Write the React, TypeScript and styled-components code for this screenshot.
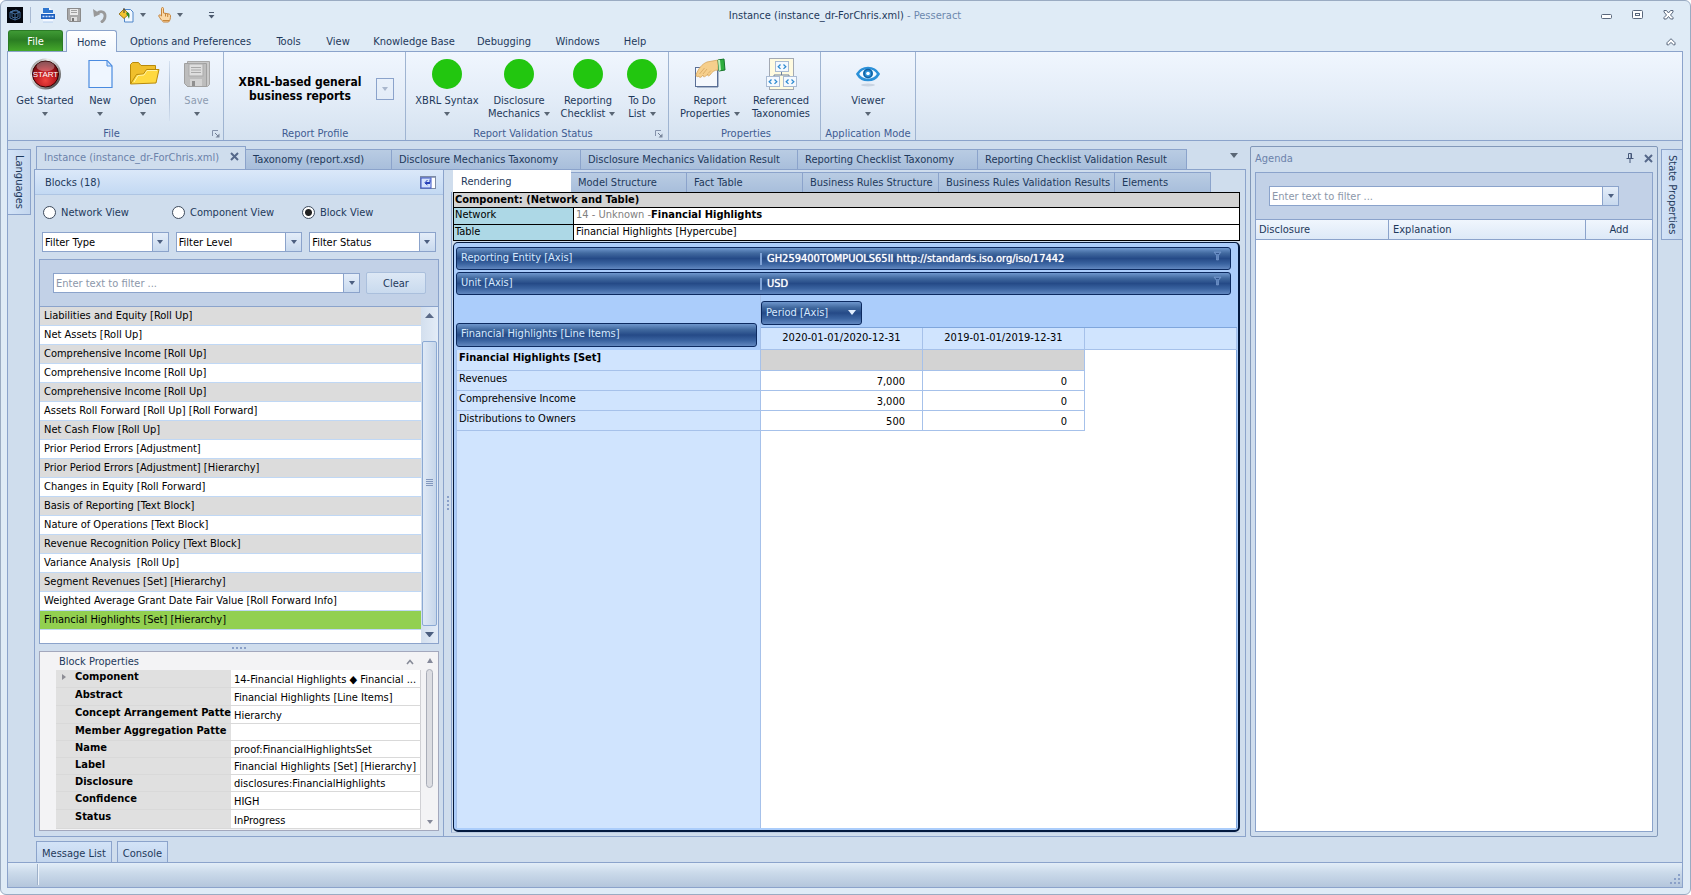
import React, { useState } from "react";
import styled, { createGlobalStyle, css } from "styled-components";

const FONT = `"DejaVu Sans Condensed", "DejaVu Sans", sans-serif`;
const c = {
  ink: "#1e395b",
  line: "#8ba3cb",
  frame: "#dfebf6",
  work: "#cfdded",
  pale: "#c2d1e7",
};

const GlobalStyle = createGlobalStyle`
  * { box-sizing: border-box; }
  body { margin: 0; background: #ffffff; font: 11px/13px ${FONT}; color: ${c.ink}; }
  button, input, select { font: inherit; color: inherit; margin: 0; }
  button { background: none; border: 0; padding: 0; cursor: pointer; }
  h1, h2 { margin: 0; font: inherit; }
`;

const Window = styled.div`
  min-height: 100vh;
  display: flex;
  flex-direction: column;
  background: ${c.frame};
  border: 1px solid #9aabc2;
  border-radius: 6px;
  padding: 0 7px 6px 6px;
`;

/* Title bar */
const TitleBar = styled.header`
  display: grid;
  grid-template-columns: 1fr auto 1fr;
  align-items: center;
  height: 29px;
  padding-bottom: 1px;
`;
const QuickBar = styled.div`
  display: flex;
  align-items: center;
`;
const QuickButton = styled.button<{ $w: number }>`
  width: ${(p) => p.$w}px;
  height: 20px;
  display: flex;
  align-items: center;
  gap: 6px;
`;
const QuickDivider = styled.span`
  width: 1px;
  height: 16px;
  margin: 0 10px 0 7px;
  background: #a9bad2;
`;
const Title = styled.h1`
  text-align: center;
  span { color: #6c88ae; }
`;
const WindowButtons = styled.div`
  display: flex;
  justify-content: flex-end;
  gap: 18px;
  padding-right: 8px;
  button { width: 13px; height: 14px; display: flex; align-items: center; justify-content: center; }
`;

/* Ribbon */
const MenuBar = styled.nav`
  display: flex;
  align-items: flex-end;
  height: 21px;
  padding-left: 1px;
`;
const FileTab = styled.button`
  width: 55px;
  height: 21px;
  color: #ffffff;
  background: linear-gradient(#3f9a35, #2a7d22 45%, #45a82b);
  border: 1px solid #2b7a25;
  border-bottom: 0;
  border-radius: 3px 3px 0 0;
`;
const MenuTab = styled.button<{ $w: number; $active?: boolean }>`
  width: ${(p) => p.$w}px;
  height: 21px;
  padding-top: 2px;
  white-space: nowrap;
  ${(p) =>
    p.$active &&
    css`
      height: 22px;
      margin: 0 0 -1px 3px;
      background: linear-gradient(#ffffff, #f0f6fd);
      border: 1px solid ${c.line};
      border-bottom: 0;
      border-radius: 3px 3px 0 0;
      z-index: 1;
    `}
`;
const CollapseButton = styled.button`
  margin: 0 7px 3px auto;
  height: 12px;
`;
const Ribbon = styled.section`
  display: flex;
  height: 90px;
  border: 1px solid ${c.line};
  background: linear-gradient(#f0f6fe, #e4edf8 50%, #d5e2f0);
`;
const Group = styled.div<{ $pad: string }>`
  display: flex;
  flex-direction: column;
  justify-content: space-between;
  padding: ${(p) => p.$pad};
  border-right: 1px solid #9fb4d1;
`;
const GroupItems = styled.div`
  display: flex;
  padding-top: 5px;
`;
const GroupCaption = styled.div`
  display: flex;
  align-items: center;
  height: 13px;
  color: #3f5c92;
  span { flex: 1; text-align: center; white-space: nowrap; }
`;
const ItemDivider = styled.span`
  width: 1px;
  height: 60px;
  margin: 4px 3px 0 4px;
  background: linear-gradient(#d5e1f0, #a5b8d2, #d5e1f0);
`;
const RibbonButton = styled.button<{ $w: number; $dim?: boolean }>`
  width: ${(p) => p.$w}px;
  display: flex;
  flex-direction: column;
  align-items: center;
  line-height: 13px;
  white-space: nowrap;
  color: ${(p) => (p.$dim ? "#8d9bb0" : c.ink)};
  > svg { margin-bottom: 3px; }
`;
const LabelLine = styled.span`
  display: flex;
  align-items: center;
  gap: 4px;
  height: 13px;
`;
const ProfileBox = styled.div`
  display: flex;
  align-items: center;
  gap: 12px;
  height: 64px;
  padding-top: 10px;
`;
const ProfileName = styled.strong`
  width: 128px;
  color: #000000;
  font-size: 12px;
  line-height: 14px;
  text-align: center;
  white-space: nowrap;
`;
const ProfileButton = styled.button`
  width: 18px;
  height: 22px;
  border: 1px solid #8ba3cb;
  display: flex;
  align-items: center;
  justify-content: center;
`;

/* Workspace */
const Workspace = styled.main`
  flex: 1;
  display: flex;
  padding-top: 5px;
  background: ${c.work};
  border: solid ${c.line};
  border-width: 0 1px;
`;
const SideStrip = styled.aside<{ $w: number; $end?: boolean }>`
  width: ${(p) => p.$w}px;
  flex: none;
  display: flex;
  justify-content: ${(p) => (p.$end ? "flex-end" : "flex-start")};
  align-items: flex-start;
  padding-top: 3px;
`;
const SideTab = styled.button<{ $end?: boolean }>`
  writing-mode: vertical-rl;
  width: ${(p) => (p.$end ? 21 : 23)}px;
  padding: 5px 0;
  line-height: 20px;
  text-align: left;
  background: linear-gradient(90deg, #d3e3f7, #c3d6ee);
  border: 1px solid ${c.line};
  border-${(p) => (p.$end ? "right" : "left")}: 0;
`;
const Center = styled.section`
  flex: 1;
  min-width: 0;
  display: flex;
  flex-direction: column;
`;
const DocTabs = styled.div`
  display: flex;
  align-items: flex-end;
  height: 23px;
  padding: 0 8px 0 2px;
  overflow: hidden;
`;
const Tab = styled.button<{ $w: number }>`
  flex: none;
  width: ${(p) => p.$w}px;
  height: 20px;
  padding-left: 7px;
  text-align: left;
  white-space: nowrap;
  background: linear-gradient(#b9cce3, #a8bedb);
  border: 1px solid ${c.line};
  border-left-width: 0;
  border-bottom: 0;
`;
const ActiveDoc = styled.div`
  flex: none;
  display: flex;
  align-items: center;
  justify-content: space-between;
  width: 210px;
  height: 23px;
  padding: 0 6px 2px 7px;
  color: #6c82aa;
  background: ${c.work};
  border: 1px solid ${c.line};
  border-bottom: 0;
`;
const TabMenuButton = styled.button`
  margin-left: auto;
  height: 23px;
  padding-bottom: 6px;
`;
const DocBody = styled.div`
  flex: 1;
  display: flex;
  border: 1px solid ${c.line};
`;

/* Blocks panel */
const Blocks = styled.section`
  width: 409px;
  flex: none;
  display: flex;
  flex-direction: column;
  border-right: 1px solid ${c.line};
  background: ${c.work};
`;
const BlocksHead = styled.div`
  display: flex;
  align-items: center;
  justify-content: space-between;
  height: 25px;
  padding: 0 7px 0 10px;
  background: linear-gradient(#dbe8f9, #c3d9f3);
  border-bottom: 1px solid #aec5e3;
  button { height: 13px; display: flex; }
`;
const Radios = styled.div`
  display: grid;
  grid-template-columns: 129px 130px 1fr;
  align-items: center;
  height: 34px;
  padding: 0 0 0 8px;
`;
const RadioLabel = styled.label`
  display: flex;
  align-items: center;
  gap: 5px;
  white-space: nowrap;
  input {
    appearance: none;
    width: 13px;
    height: 13px;
    border: 1px solid #3d4a5c;
    border-radius: 50%;
    background: #ffffff;
  }
  input:checked { background: radial-gradient(circle, #222222 0 3px, #ffffff 4px); }
`;
const Combos = styled.div`
  display: grid;
  grid-template-columns: 1fr 1fr 1fr;
  gap: 7px;
  padding: 3px 7px 0 7px;
`;
const Combo = styled.div`
  display: grid;
  height: 20px;
  border: 1px solid ${c.line};
  background: #ffffff;
  > * { grid-area: 1 / 1; }
  select {
    appearance: none;
    width: 100%;
    border: 0;
    padding: 0 18px 0 2px;
    background: none;
    color: #000000;
    outline: none;
  }
`;
const arrowFace = css`
  display: flex;
  align-items: center;
  justify-content: center;
  width: 16px;
  border-left: 1px solid ${c.line};
  background: linear-gradient(#e4edf9, #c8d9ee);
`;
const ComboArrow = styled.span`
  ${arrowFace}
  justify-self: end;
  pointer-events: none;
`;
const FilterBox = styled.div<{ $pad: string }>`
  display: flex;
  align-items: center;
  gap: 6px;
  height: 47px;
  padding: ${(p) => p.$pad};
  background: ${c.pale};
  border-bottom: 1px solid ${c.line};
`;
const FilterField = styled.div`
  flex: 1;
  display: flex;
  height: 20px;
  border: 1px solid ${c.line};
  background: #ffffff;
  input {
    flex: 1;
    min-width: 0;
    border: 0;
    padding: 0 2px;
    background: none;
    outline: none;
  }
  input::placeholder { color: #8c97aa; opacity: 1; }
  button { ${arrowFace} }
`;
const ClearButton = styled.button`
  width: 60px;
  height: 22px;
  border: 1px solid #aabfdc;
  border-radius: 2px;
  background: linear-gradient(#dde8f5, #c9daee);
`;
const ListBox = styled.div`
  flex: 1;
  display: flex;
  flex-direction: column;
  margin: 7px 4px 0 4px;
  border: 1px solid ${c.line};
  background: #ffffff;
`;
const ListArea = styled.div`
  flex: 1;
  display: flex;
`;
const List = styled.ul`
  flex: 1;
  margin: 0;
  padding: 0;
  list-style: none;
  color: #000000;
`;
const ListItem = styled.li<{ $tone: "grey" | "white" | "green" }>`
  height: 19px;
  padding-left: 4px;
  line-height: 17px;
  white-space: pre;
  border-bottom: 1px solid #c0d8f5;
  background: ${(p) => ({ grey: "#dcdcdc", white: "#ffffff", green: "#92d050" })[p.$tone]};
`;
const Scroller = styled.div<{ $grey?: boolean }>`
  width: 17px;
  display: flex;
  flex-direction: column;
  align-items: center;
  padding: 6px 0;
  background: ${(p) => (p.$grey ? "#f3f3f5" : "linear-gradient(90deg, #d3dfee, #e3ecf7)")};
`;
const Thumb = styled.div`
  flex: 1;
  display: flex;
  align-items: center;
  justify-content: center;
  width: 15px;
  margin: 23px 0 6px;
  border: 1px solid #8ba9d3;
  border-radius: 2px;
  background: linear-gradient(90deg, #dfe9f6, #c6d6ea);
`;
const GreyThumb = styled.div`
  width: 7px;
  height: 119px;
  margin: 6px 0 auto;
  border: 1px solid #a9adb8;
  border-radius: 4px;
  background: #dcdde2;
`;
const RowSplitter = styled.div`
  height: 7px;
  display: flex;
  align-items: center;
  justify-content: center;
`;
const Props = styled.div`
  height: 180px;
  display: flex;
  margin: 0 4px 5px 4px;
  border: 1px solid #a3a8bd;
  background: #f3f3f5;
`;
const PropsMain = styled.div`
  flex: 1;
  min-width: 0;
  padding-left: 16px;
  overflow: hidden;
`;
const PropsHead = styled.div`
  display: flex;
  align-items: center;
  justify-content: space-between;
  height: 18px;
  padding: 0 7px 0 3px;
`;
const PropTable = styled.table`
  width: 100%;
  table-layout: fixed;
  border-collapse: separate;
  border-spacing: 0;
  color: #000000;
  th, td { padding: 0; white-space: nowrap; text-align: left; border-bottom: 1px solid #d9d9d9; }
  th { width: 175px; background: #e0e0e0; vertical-align: top; line-height: 13px; }
  td { background: #ffffff; border-right: 1px solid #d0d0d4; vertical-align: bottom; line-height: 14px; padding-left: 3px; }
`;
const PropRow = styled.tr<{ $h: number }>`
  height: ${(p) => p.$h}px;
`;
const PropName = styled.span`
  display: flex;
  align-items: center;
  svg { flex: none; margin: 0 8px 0 5px; }
`;

/* Rendering pane */
const ColumnSplitter = styled.div`
  width: 7px;
  flex: none;
  display: flex;
  align-items: center;
  justify-content: center;
`;
const Pane = styled.section`
  flex: 1;
  min-width: 0;
  display: flex;
  flex-direction: column;
  padding: 0 5px 3px 0;
`;
const PaneTabs = styled.div`
  display: flex;
  align-items: flex-end;
  height: 22px;
  padding-left: 2px;
  overflow: hidden;
`;
const ActivePaneTab = styled.button`
  flex: none;
  width: 118px;
  height: 22px;
  padding-left: 8px;
  text-align: left;
  background: #ffffff;
`;
const PaneBody = styled.div`
  flex: 1;
  display: flex;
  flex-direction: column;
  padding-left: 1px;
  border-left: 1px solid ${c.line};
  border-bottom: 1px solid #b9c9e0;
`;
const InfoTable = styled.table`
  width: 100%;
  border-collapse: collapse;
  color: #000000;
  background: #ffffff;
  margin-bottom: 1px;
  th, td { border: 1px solid #000000; padding: 0 2px; height: 16px; line-height: 14px; text-align: left; vertical-align: top; }
  thead th { background: #d3d3d3; font-weight: bold; height: 15px; padding: 0 1px; }
  tbody th { width: 120px; background: #add8e6; font-weight: normal; padding: 0 1px; }
  tbody tr:first-child > * { height: 17px; }
  td span { color: #808080; }
`;
const Pivot = styled.div`
  flex: 1;
  display: flex;
  flex-direction: column;
  padding: 4px 1px 2px 2px;
  border: 1px solid #03193f;
  border-right-width: 2px;
  border-bottom-width: 2px;
  border-radius: 5px;
  background: #abcdfb;
`;
const barFace = css`
  color: #d6e9ff;
  background: linear-gradient(#6f97cd, #41699f 25%, #254a87 50%, #3a63a0 75%, #6288c0);
  border: 1px solid #0c2a60;
  border-radius: 3px;
`;
const Bars = styled.div`
  display: flex;
  flex-direction: column;
  gap: 2px;
  padding-right: 6px;
`;
const AxisBar = styled.div`
  ${barFace}
  display: grid;
  grid-template-columns: 299px 1fr auto;
  height: 23px;
  padding: 0 8px 0 4px;
  line-height: 20px;
  svg { margin-top: 3px; }
`;
const AxisValue = styled.span`
  display: flex;
  align-items: center;
  gap: 5px;
  color: #ffffff;
  text-shadow: 0 0 1px #ffffff;
  &::before { content: ""; width: 2px; height: 12px; background: #7fa2d6; }
`;
const PivotTable = styled.table`
  width: 100%;
  table-layout: fixed;
  border-collapse: separate;
  border-spacing: 0;
  color: #000000;
  th, td { padding: 0; font-weight: normal; }
`;
const LineItemsCell = styled.th`
  vertical-align: bottom;
  text-align: left;
  border-right: 1px solid #a6c1ea;
`;
const LineItems = styled.div`
  ${barFace}
  height: 24px;
  margin: 0 3px 3px 0;
  padding-left: 4px;
  line-height: 20px;
`;
const PeriodCell = styled.th`
  height: 33px;
  text-align: left;
  vertical-align: top;
  border-bottom: 1px solid #7fa6dc;
`;
const PeriodButton = styled.button`
  ${barFace}
  display: flex;
  align-items: center;
  justify-content: space-between;
  width: 101px;
  height: 24px;
  margin-top: 6px;
  padding: 0 5px 1px 4px;
`;
const ColHead = styled.th`
  height: 22px;
  background: #d0e4fe;
  border-right: 1px solid #a6c1ea;
  border-bottom: 1px solid #a6c1ea;
  && { padding-bottom: 3px; }
`;
const RowHead = styled.th<{ $first?: boolean }>`
  height: ${(p) => (p.$first ? 21 : 20)}px;
  text-align: left;
  vertical-align: top;
  background: #d0e4fe;
  border: solid #a6c1ea;
  border-width: 0 1px 1px 1px;
  && { padding: 1px 0 0 2px; font-weight: ${(p) => (p.$first ? "bold" : "normal")}; }
`;
const Cell = styled.td<{ $grey?: boolean }>`
  text-align: right;
  background: ${(p) => (p.$grey ? "#d3d3d3" : "#ffffff")};
  border-right: 1px solid #a6c1ea;
  border-bottom: 1px solid #a6c1ea;
  && { padding: 2px 17px 0 0; }
`;
const Blank = styled.td`
  background: #ffffff;
  border-right: 1px solid #7fa6dc;
`;
const Rest = styled.div`
  flex: 1;
  display: grid;
  grid-template-columns: 305px 1fr;
  background: #ffffff;
  border-right: 1px solid #7fa6dc;
  &::before { content: ""; background: #d0e4fe; border: solid #a6c1ea; border-width: 0 1px; }
`;

/* Agenda */
const Agenda = styled.aside`
  width: 408px;
  flex: none;
  margin-left: 4px;
  padding: 0 4px 4px 4px;
  display: flex;
  flex-direction: column;
  border: 1px solid #8298b9;
  border-radius: 2px;
`;
const AgendaHead = styled.div`
  display: flex;
  align-items: center;
  gap: 10px;
  height: 25px;
  padding-bottom: 3px;
  color: #6c82aa;
  h2 { flex: 1; }
  button { height: 14px; display: flex; align-items: center; }
`;
const AgendaBody = styled.div`
  flex: 1;
  background: #ffffff;
  border: 1px solid ${c.line};
`;
const AgendaTable = styled.table`
  width: 100%;
  table-layout: fixed;
  border-collapse: separate;
  border-spacing: 0;
  th {
    height: 20px;
    padding: 0 4px;
    font-weight: normal;
    text-align: left;
    background: linear-gradient(#f0f6fd, #dde9f7);
    border: solid ${c.line};
    border-width: 0 1px 1px 0;
  }
  th:first-child { width: 133px; padding: 0 3px; }
  th:last-child { width: 66px; text-align: center; border-right: 0; }
`;

/* Bottom */
const BottomTabs = styled.div`
  display: flex;
  gap: 5px;
  height: 25px;
  padding: 4px 0 0 28px;
  background: ${c.work};
  border: solid ${c.line};
  border-width: 0 1px;
  button {
    padding: 2px 5px 0;
    border: 1px solid ${c.line};
    border-bottom: 0;
    background: linear-gradient(#d3e3f7, #c3d6ee);
  }
`;
const StatusBar = styled.footer`
  display: flex;
  align-items: flex-end;
  justify-content: space-between;
  height: 26px;
  padding: 0 1px 2px 29px;
  border: 1px solid ${c.line};
  background: linear-gradient(#e2edf8, #cbdaea 40%, #b4c6dc);
  &::before { content: ""; width: 1px; height: 21px; background: #eef4fb; border-left: 1px solid #9db0c9; box-sizing: content-box; }
`;

/* Glyphs */
const Caret = ({ w = 6, fill = "#5a6675" }: { w?: number; fill?: string }) => (
  <svg width={w} height={w / 2 + 1} viewBox="0 0 6 4" preserveAspectRatio="none" aria-hidden="true">
    <path d="M0 0h6L3 4z" fill={fill} />
  </svg>
);
const UpTri = ({ w = 9, fill = "#5a6a88" }: { w?: number; fill?: string }) => (
  <svg width={w} height="5" viewBox="0 0 9 5" preserveAspectRatio="none" aria-hidden="true">
    <path d="M0 5h9L4.500 0z" fill={fill} />
  </svg>
);
const Cross = ({ size = 9 }: { size?: number }) => (
  <svg width={size} height={size} viewBox="0 0 9 9" aria-hidden="true">
    <path d="M1 1l7 7M8 1L1 8" stroke="#56688a" strokeWidth="2" />
  </svg>
);
const Dots = ({ vertical }: { vertical?: boolean }) => (
  <svg width={vertical ? 2 : 14} height={vertical ? 14 : 2} aria-hidden="true">
    {[0, 4, 8, 12].map((n) => (
      <rect key={n} x={vertical ? 0 : n} y={vertical ? n : 0} width="2" height="2" fill="#8aa0c8" />
    ))}
  </svg>
);
const Launcher = () => (
  <svg width="8" height="8" viewBox="0 0 8 8" aria-hidden="true">
    <path d="M.5 6V.5H6" fill="none" stroke="#8492ab" />
    <path d="M3 3l3 3" stroke="#6f7c94" />
    <path d="M7.500 3.500v4h-4z" fill="#7b879c" />
  </svg>
);
const Funnel = () => (
  <svg width="9" height="10" viewBox="0 0 9 10" aria-hidden="true">
    <path d="M1 1h7L5.500 4.500V9h-2V4.500z" fill="#5d83bd" stroke="#7d9fd2" strokeWidth=".6" />
    <path d="M3 2.500h3" stroke="#27497f" strokeWidth=".8" />
  </svg>
);
const LogoIcon = () => (
  <svg width="16" height="16" viewBox="0 0 16 16" aria-hidden="true">
    <rect width="16" height="16" fill="#03060d" />
    <path d="M3 5l6-2 4 2v6l-5 2-5-2zM3 5l5 2 5-2M8 7v6M5 4v6l3 1 3-1V4z" fill="none" stroke="#4f80b8" strokeWidth=".8" />
  </svg>
);
const XbrlIcon = () => (
  <svg width="14" height="15" viewBox="0 0 14 15" aria-hidden="true">
    <path d="M2 0h7l3 3v11H2z" fill="#f3f8ff" />
    <path d="M2 5V0h6v2h4v3z" fill="#2f77d0" />
    <rect y="6" width="14" height="5" fill="#1c5fc0" />
    <path d="M1.500 8.500h11" stroke="#cfe2ff" strokeWidth="1.600" strokeDasharray="2 1" />
    <path d="M2 14h10" stroke="#b6cfee" />
  </svg>
);
const DiskIcon = () => (
  <svg width="14" height="14" viewBox="0 0 14 14" aria-hidden="true">
    <path d="M.5.5h13v13h-11l-2-2z" fill="#a9a9a9" stroke="#8b8b8b" />
    <rect x="3" y="1" width="8" height="6" fill="#e9e9e9" />
    <path d="M4 2.500h6M4 4.500h6" stroke="#a0a0a0" />
    <rect x="4" y="9" width="6" height="4" fill="#dedede" />
    <rect x="5" y="10" width="2" height="3" fill="#777" />
  </svg>
);
const UndoIcon = () => (
  <svg width="14" height="15" viewBox="0 0 14 15" aria-hidden="true">
    <path d="M4 5.500c4-3.500 8.500-1.500 8 3 0 2.500-1.500 4.500-4 6" fill="none" stroke="#999999" strokeWidth="2.800" />
    <path d="M0 1l1 8 6.500-3z" fill="#999999" />
  </svg>
);
const PaintIcon = () => (
  <svg width="15" height="15" viewBox="0 0 15 15" aria-hidden="true">
    <path d="M5.500 1.500h6l2.500 2.500v10H5.500z" fill="#f1f7ff" stroke="#4f86c9" />
    <path d="M0 6l5-5 5 5-5 4.500z" fill="#f2c230" stroke="#8a6410" strokeWidth=".8" />
    <path d="M5 5V0" stroke="#3b3b3b" />
    <path d="M8 4c3 1 3 3 2 7-1-2-1-4-3-5z" fill="#2f8a2c" />
  </svg>
);
const HandIcon = () => (
  <svg width="13" height="16" viewBox="0 0 13 16" aria-hidden="true">
    <path d="M3.500 9V1.500c0-1.300 2-1.300 2 0V6l5.500 1c1 .3 1.500 1 1.500 2 0 2-.5 5-2 6h-5C3 13 2 11 .7 9c0-1.500 1.500-1.500 2.800 0z" fill="#fbd9a8" stroke="#c27a2c" strokeWidth=".9" />
    <path d="M7.500 6.500v3M9.700 7v3M5 13.500h6" stroke="#b9711f" strokeWidth=".8" />
  </svg>
);
const MoreIcon = () => (
  <svg width="7" height="8" viewBox="0 0 7 8" aria-hidden="true">
    <path d="M1 1.500h5" stroke="#4c5a6e" />
    <path d="M.5 4h6L3.500 7.500z" fill="#4c5a6e" />
  </svg>
);
const StartIcon = () => (
  <svg width="34" height="34" viewBox="0 0 34 34" aria-hidden="true">
    <defs>
      <radialGradient id="red" cx=".5" cy=".75" r=".7">
        <stop offset="0" stopColor="#f0453f" />
        <stop offset=".6" stopColor="#b3141b" />
        <stop offset="1" stopColor="#5d0a10" />
      </radialGradient>
      <linearGradient id="rim" x2="1" y2="1">
        <stop offset="0" stopColor="#555" />
        <stop offset=".3" stopColor="#eee" />
        <stop offset=".7" stopColor="#888" />
        <stop offset="1" stopColor="#111" />
      </linearGradient>
    </defs>
    <circle cx="17.500" cy="17" r="15.500" fill="url(#rim)" />
    <circle cx="17.500" cy="17" r="13" fill="url(#red)" stroke="#300" />
    <ellipse cx="17.500" cy="9.500" rx="9" ry="5" fill="#fff" opacity=".3" />
    <text x="17.500" y="20" textAnchor="middle" fontFamily="Liberation Sans, sans-serif" fontSize="8" fill="#fff">START</text>
  </svg>
);
const NewIcon = () => (
  <svg width="34" height="34" viewBox="0 0 34 34" aria-hidden="true">
    <path d="M6 3.500h18l5 5.500v21.500H6z" fill="#eff6ff" stroke="#4a8be0" strokeWidth="1.200" />
    <path d="M24 3.500V9h5z" fill="#cfe2fa" stroke="#4a8be0" />
  </svg>
);
const OpenIcon = () => (
  <svg width="34" height="34" viewBox="0 0 34 34" aria-hidden="true">
    <path d="M4.500 27V7.500l2-2h6l2.500 3h14.500v6" fill="#f0bf2c" stroke="#b98a0b" />
    <path d="M4.500 27l6-9.500 7-.5 3-4.500h12.500L30 26z" fill="#ffd93f" stroke="#b98a0b" />
    <path d="M8 25l4-6.500 6-.5 3-4.500h10" fill="none" stroke="#fff3a5" />
  </svg>
);
const SaveIcon = () => (
  <svg width="34" height="34" viewBox="0 0 34 34" aria-hidden="true">
    <path d="M7.500 4.500h22v23l-2 2h-20z" fill="#c9c9c9" stroke="#a7a7a7" />
    <path d="M4.500 6.500h22v23h-19l-3-3z" fill="#bdbdbd" stroke="#a0a0a0" />
    <rect x="9" y="7" width="14" height="12" fill="#dedede" stroke="#ababab" />
    <path d="M11 10.500h10M11 13h10M11 15.500h10" stroke="#a8a8a8" />
    <rect x="10" y="22" width="12" height="7" fill="#d3d3d3" />
    <rect x="12" y="24" width="3" height="5" fill="#8f8f8f" />
  </svg>
);
const GreenDot = () => (
  <svg width="34" height="34" viewBox="0 0 34 34" aria-hidden="true">
    <circle cx="17" cy="17" r="15" fill="#22c60f" />
  </svg>
);
const ReportIcon = () => (
  <svg width="34" height="34" viewBox="0 0 34 34" aria-hidden="true">
    <rect x="2.500" y="10.500" width="22" height="19" fill="#f5f8fd" stroke="#5a6f96" />
    <path d="M25 30.500H4M25.500 30V12" stroke="#aab7cc" />
    <path d="M3 18C5 12 9 7 14 5l11-2v10c-4 0-6 2-8 5-2 2-3 0-2-1-3 3-5 4-5 1-2 3-4 3-4 1-1 1-3 1-3-1z" fill="#f6cf8c" stroke="#d6a660" strokeWidth=".8" />
    <path d="M10 17l4-5M6.500 17l5-6M15 16.500l3-3" stroke="#d6a660" strokeWidth=".8" />
    <path d="M25 3l6-1 1 11-6 1z" fill="#2fae3f" stroke="#15752a" />
    <path d="M25 3l2 0 1 10-2 1z" fill="#bff0bf" />
  </svg>
);
const Code = ({ x, y }: { x: number; y: number }) => (
  <g transform={`translate(${x} ${y})`}>
    <rect x=".5" y=".5" width="13" height="10" fill="#f4f9ff" stroke="#a9bbd3" />
    <path d="M5.500 3.500L3.200 5.700l2.300 2.200M8.500 3.500l2.300 2.200-2.300 2.200" fill="none" stroke="#2f8bd0" strokeWidth="1.300" />
  </g>
);
const TaxonomyIcon = () => (
  <svg width="34" height="34" viewBox="0 0 34 34" aria-hidden="true">
    <rect x="5.500" y="1.500" width="24" height="31" fill="#fffbe0" stroke="#a3a9b3" />
    <path d="M17.500 15v3M10 21v-3h15v3" fill="none" stroke="#6a7f9d" />
    <Code x={11} y={4} />
    <Code x={2} y={19} />
    <Code x={19} y={19} />
  </svg>
);
const EyeIcon = () => (
  <svg width="34" height="34" viewBox="0 0 34 34" aria-hidden="true">
    <ellipse cx="17" cy="28" rx="7" ry="1.500" fill="#c9d4e2" />
    <path d="M6.500 17C11 9 23 9 27.500 17 23 25 11 25 6.500 17z" fill="#f4faff" stroke="#2a90d8" strokeWidth="2.600" />
    <circle cx="17" cy="16.500" r="5" fill="#2a92da" />
    <circle cx="17" cy="16.500" r="4" fill="none" stroke="#14609f" strokeWidth="1.500" />
    <circle cx="17" cy="16.500" r="1.800" fill="#fff" />
  </svg>
);

/* Data */
const menus: [string, number][] = [
  ["Options and Preferences", 147],
  ["Tools", 49],
  ["View", 50],
  ["Knowledge Base", 102],
  ["Debugging", 78],
  ["Windows", 69],
  ["Help", 46],
];
const docTabs: [string, number][] = [
  ["Taxonomy (report.xsd)", 146],
  ["Disclosure Mechanics Taxonomy", 189],
  ["Disclosure Mechanics Validation Result", 217],
  ["Reporting Checklist Taxonomy", 180],
  ["Reporting Checklist Validation Result", 209],
];
const paneTabs: [string, number][] = [
  ["Model Structure", 116],
  ["Fact Table", 116],
  ["Business Rules Structure", 136],
  ["Business Rules Validation Results", 176],
  ["Elements", 96],
];
const blocks = [
  "Liabilities and Equity [Roll Up]",
  "Net Assets [Roll Up]",
  "Comprehensive Income [Roll Up]",
  "Comprehensive Income [Roll Up]",
  "Comprehensive Income [Roll Up]",
  "Assets Roll Forward [Roll Up] [Roll Forward]",
  "Net Cash Flow [Roll Up]",
  "Prior Period Errors [Adjustment]",
  "Prior Period Errors [Adjustment] [Hierarchy]",
  "Changes in Equity [Roll Forward]",
  "Basis of Reporting [Text Block]",
  "Nature of Operations [Text Block]",
  "Revenue Recognition Policy [Text Block]",
  "Variance Analysis  [Roll Up]",
  "Segment Revenues [Set] [Hierarchy]",
  "Weighted Average Grant Date Fair Value [Roll Forward Info]",
  "Financial Highlights [Set] [Hierarchy]",
];
const props: [string, string, number][] = [
  ["Component", "14-Financial Highlights ◆ Financial ...", 18],
  ["Abstract", "Financial Highlights [Line Items]", 18],
  ["Concept Arrangement Patte", "Hierarchy", 18],
  ["Member Aggregation Patte", "", 17],
  ["Name", "proof:FinancialHighlightsSet", 17],
  ["Label", "Financial Highlights [Set] [Hierarchy]", 17],
  ["Disclosure", "disclosures:FinancialHighlights", 17],
  ["Confidence", "HIGH", 18],
  ["Status", "InProgress", 19],
];
const facts: [string, string, string][] = [
  ["Revenues", "7,000", "0"],
  ["Comprehensive Income", "3,000", "0"],
  ["Distributions to Owners", "500", "0"],
];

interface ItemProps {
  icon: React.ReactNode;
  lines: string[];
  w: number;
  caret?: boolean;
  dim?: boolean;
}
const RibbonItem = ({ icon, lines, w, caret = true, dim }: ItemProps) => (
  <RibbonButton $w={w} $dim={dim} disabled={dim}>
    {icon}
    <LabelLine>{lines[0]}</LabelLine>
    <LabelLine>
      {lines[1]}
      {caret && <Caret />}
    </LabelLine>
  </RibbonButton>
);

export default function App() {
  const [view, setView] = useState("Block View");
  return (
    <>
      <GlobalStyle />
      <Window>
        <TitleBar>
          <QuickBar>
            <LogoIcon />
            <QuickDivider />
            <QuickButton $w={26} aria-label="XBRL"><XbrlIcon /></QuickButton>
            <QuickButton $w={26} aria-label="Save"><DiskIcon /></QuickButton>
            <QuickButton $w={26} aria-label="Undo"><UndoIcon /></QuickButton>
            <QuickButton $w={39} aria-label="Skin"><PaintIcon /><Caret /></QuickButton>
            <QuickButton $w={50} aria-label="Touch mode"><HandIcon /><Caret /></QuickButton>
            <QuickButton $w={10} aria-label="Customize"><MoreIcon /></QuickButton>
          </QuickBar>
          <Title>Instance (instance_dr-ForChris.xml) <span>- Pesseract</span></Title>
          <WindowButtons>
            <button aria-label="Minimize">
              <svg width="11" height="8" viewBox="0 0 11 8"><rect x=".5" y="3.500" width="10" height="4" rx="1" fill="#fff" stroke="#59677c" /></svg>
            </button>
            <button aria-label="Maximize">
              <svg width="11" height="10" viewBox="0 0 11 10"><rect x=".5" y=".5" width="10" height="8" rx="1" fill="#fff" stroke="#59677c" /><rect x="3.500" y="3.500" width="4" height="2" fill="none" stroke="#59677c" /></svg>
            </button>
            <button aria-label="Close">
              <svg width="11" height="10" viewBox="0 0 11 10"><path d="M1 .5h2.500l2 2.500 2-2.500H10v1.500L7.500 5 10 7.500V9H7.500l-2-2.500-2 2.500H1V7.500L3.500 5 1 2z" fill="#fff" stroke="#59677c" /></svg>
            </button>
          </WindowButtons>
        </TitleBar>
        <MenuBar>
          <FileTab>File</FileTab>
          <MenuTab $w={51} $active>Home</MenuTab>
          {menus.map(([t, w]) => (
            <MenuTab key={t} $w={w}>{t}</MenuTab>
          ))}
          <CollapseButton aria-label="Collapse ribbon">
            <svg width="10" height="8" viewBox="0 0 10 8"><path d="M5 .7l4 4v2.100H7.500L5 4.500 2.500 6.800H1V4.700z" fill="#fff" stroke="#59677c" /></svg>
          </CollapseButton>
        </MenuBar>
        <Ribbon>
          <Group $pad="0 3px 0 3px">
            <GroupItems>
              <RibbonItem icon={<StartIcon />} lines={["Get Started"]} w={68} />
              <RibbonItem icon={<NewIcon />} lines={["New"]} w={42} />
              <RibbonItem icon={<OpenIcon />} lines={["Open"]} w={44} />
              <ItemDivider />
              <RibbonItem icon={<SaveIcon />} lines={["Save"]} w={47} dim />
            </GroupItems>
            <GroupCaption><span>File</span><Launcher /></GroupCaption>
          </Group>
          <Group $pad="0 11px 0 12px">
            <ProfileBox>
              <ProfileName>XBRL-based general<br />business reports</ProfileName>
              <ProfileButton aria-label="Choose report profile"><Caret fill="#a9b7cd" /></ProfileButton>
            </ProfileBox>
            <GroupCaption><span>Report Profile</span></GroupCaption>
          </Group>
          <Group $pad="0 5px">
            <GroupItems>
              <RibbonItem icon={<GreenDot />} lines={["XBRL Syntax"]} w={72} />
              <RibbonItem icon={<GreenDot />} lines={["Disclosure", "Mechanics"]} w={72} />
              <RibbonItem icon={<GreenDot />} lines={["Reporting", "Checklist"]} w={66} />
              <RibbonItem icon={<GreenDot />} lines={["To Do", "List"]} w={42} />
            </GroupItems>
            <GroupCaption><span>Report Validation Status</span><Launcher /></GroupCaption>
          </Group>
          <Group $pad="0 3px 0 6px">
            <GroupItems>
              <RibbonItem icon={<ReportIcon />} lines={["Report", "Properties"]} w={70} />
              <RibbonItem icon={<TaxonomyIcon />} lines={["Referenced", "Taxonomies"]} w={72} caret={false} />
            </GroupItems>
            <GroupCaption><span>Properties</span></GroupCaption>
          </Group>
          <Group $pad="0 4px">
            <GroupItems>
              <RibbonItem icon={<EyeIcon />} lines={["Viewer"]} w={86} />
            </GroupItems>
            <GroupCaption><span>Application Mode</span></GroupCaption>
          </Group>
        </Ribbon>

        <Workspace>
          <SideStrip $w={26}>
            <SideTab>Languages</SideTab>
          </SideStrip>
          <Center>
            <DocTabs>
              <ActiveDoc>
                Instance (instance_dr-ForChris.xml)
                <button aria-label="Close tab"><Cross /></button>
              </ActiveDoc>
              {docTabs.map(([t, w]) => (
                <Tab key={t} $w={w}>{t}</Tab>
              ))}
              <TabMenuButton aria-label="All tabs"><Caret w={8} /></TabMenuButton>
            </DocTabs>
            <DocBody>
              <Blocks>
                <BlocksHead>
                  <h2>Blocks (18)</h2>
                  <button aria-label="Collapse panel">
                    <svg width="16" height="13" viewBox="0 0 16 13">
                      <rect x=".5" y=".5" width="15" height="12" fill="#fff" stroke="#7d8ba6" />
                      <path d="M1 1.500h14" stroke="#9aa7c0" />
                      <rect x="1" y="2" width="10" height="10" fill="#d5e2fb" stroke="#3a55c8" />
                      <path d="M10 3.500v3H5.500M7.500 4L5 6.700l2.500 2.600M5 7.500h5" fill="none" stroke="#2740b8" />
                    </svg>
                  </button>
                </BlocksHead>
                <Radios>
                  {["Network View", "Component View", "Block View"].map((v) => (
                    <RadioLabel key={v}>
                      <input type="radio" name="view" checked={view === v} onChange={() => setView(v)} />
                      {v}
                    </RadioLabel>
                  ))}
                </Radios>
                <Combos>
                  {["Filter Type", "Filter Level", "Filter Status"].map((f) => (
                    <Combo key={f}>
                      <select aria-label={f}><option>{f}</option></select>
                      <ComboArrow><Caret fill="#4c5f80" /></ComboArrow>
                    </Combo>
                  ))}
                </Combos>
                <ListBox>
                  <FilterBox $pad="0 12px 0 13px">
                    <FilterField>
                      <input aria-label="Filter blocks" placeholder="Enter text to filter ..." />
                      <button aria-label="Filter history"><Caret fill="#4c5f80" /></button>
                    </FilterField>
                    <ClearButton>Clear</ClearButton>
                  </FilterBox>
                  <ListArea>
                    <List>
                      {blocks.map((b, i) => (
                        <ListItem key={i} $tone={i === 16 ? "green" : i % 2 ? "white" : "grey"}>{b}</ListItem>
                      ))}
                    </List>
                    <Scroller>
                      <UpTri />
                      <Thumb>
                        <svg width="7" height="8" viewBox="0 0 7 8"><path d="M0 .5h7M0 2.500h7M0 4.500h7M0 6.500h7" stroke="#8297bd" /></svg>
                      </Thumb>
                      <Caret w={9} fill="#4c5f80" />
                    </Scroller>
                  </ListArea>
                </ListBox>
                <RowSplitter><Dots /></RowSplitter>
                <Props>
                  <PropsMain>
                    <PropsHead>
                      Block Properties
                      <button aria-label="Collapse section">
                        <svg width="8" height="6" viewBox="0 0 8 6"><path d="M1 5l3-3.500L7 5" fill="none" stroke="#878b98" strokeWidth="1.600" /></svg>
                      </button>
                    </PropsHead>
                    <PropTable>
                      <tbody>
                        {props.map(([name, value, h], i) => (
                          <PropRow key={name} $h={h}>
                            <th scope="row">
                              <PropName>
                                <svg width="6" height="8" viewBox="0 0 6 8">
                                  {i === 0 && <path d="M1 1l4 3-4 3z" fill="#8d8d95" />}
                                </svg>
                                {name}
                              </PropName>
                            </th>
                            <td>{value}</td>
                          </PropRow>
                        ))}
                      </tbody>
                    </PropTable>
                  </PropsMain>
                  <Scroller $grey>
                    <UpTri w={6} fill="#85899a" />
                    <GreyThumb />
                    <Caret fill="#85899a" />
                  </Scroller>
                </Props>
              </Blocks>
              <ColumnSplitter><Dots vertical /></ColumnSplitter>
              <Pane>
                <PaneTabs>
                  <ActivePaneTab>Rendering</ActivePaneTab>
                  {paneTabs.map(([t, w]) => (
                    <Tab key={t} $w={w}>{t}</Tab>
                  ))}
                </PaneTabs>
                <PaneBody>
                  <InfoTable>
                    <thead>
                      <tr><th colSpan={2}>Component: (Network and Table)</th></tr>
                    </thead>
                    <tbody>
                      <tr>
                        <th scope="row">Network</th>
                        <td><span>14 - Unknown -</span><strong>Financial Highlights</strong></td>
                      </tr>
                      <tr>
                        <th scope="row">Table</th>
                        <td>Financial Highlights [Hypercube]</td>
                      </tr>
                    </tbody>
                  </InfoTable>
                  <Pivot>
                    <Bars>
                      <AxisBar>
                        Reporting Entity [Axis]
                        <AxisValue>GH259400TOMPUOLS65II http://standards.iso.org/iso/17442</AxisValue>
                        <Funnel />
                      </AxisBar>
                      <AxisBar>
                        Unit [Axis]
                        <AxisValue>USD</AxisValue>
                        <Funnel />
                      </AxisBar>
                    </Bars>
                    <PivotTable>
                      <colgroup>
                        <col width="305" />
                        <col width="162" />
                        <col width="162" />
                        <col />
                      </colgroup>
                      <thead>
                        <tr>
                          <LineItemsCell rowSpan={2}>
                            <LineItems>Financial Highlights [Line Items]</LineItems>
                          </LineItemsCell>
                          <PeriodCell colSpan={3}>
                            <PeriodButton>Period [Axis]<Caret w={8} fill="#e3efff" /></PeriodButton>
                          </PeriodCell>
                        </tr>
                        <tr>
                          <ColHead>2020-01-01/2020-12-31</ColHead>
                          <ColHead>2019-01-01/2019-12-31</ColHead>
                          <ColHead />
                        </tr>
                      </thead>
                      <tbody>
                        <tr>
                          <RowHead $first scope="row">Financial Highlights [Set]</RowHead>
                          <Cell $grey />
                          <Cell $grey />
                          <Blank />
                        </tr>
                        {facts.map(([n, a, b]) => (
                          <tr key={n}>
                            <RowHead scope="row">{n}</RowHead>
                            <Cell>{a}</Cell>
                            <Cell>{b}</Cell>
                            <Blank />
                          </tr>
                        ))}
                      </tbody>
                    </PivotTable>
                    <Rest />
                  </Pivot>
                </PaneBody>
              </Pane>
            </DocBody>
          </Center>
          <Agenda>
            <AgendaHead>
              <h2>Agenda</h2>
              <button aria-label="Pin">
                <svg width="8" height="10" viewBox="0 0 8 10"><path d="M2.500 5.500v-5h3v5M.5 5.500h7M4 6v4M5 1v4" fill="none" stroke="#46587a" /></svg>
              </button>
              <button aria-label="Close agenda"><Cross /></button>
            </AgendaHead>
            <AgendaBody>
              <FilterBox $pad="0 33px 0 13px">
                <FilterField>
                  <input aria-label="Filter agenda" placeholder="Enter text to filter ..." />
                  <button aria-label="Agenda filter history"><Caret fill="#4c5f80" /></button>
                </FilterField>
              </FilterBox>
              <AgendaTable>
                <thead>
                  <tr><th>Disclosure</th><th>Explanation</th><th>Add</th></tr>
                </thead>
              </AgendaTable>
            </AgendaBody>
          </Agenda>
          <SideStrip $w={24} $end>
            <SideTab $end>State Properties</SideTab>
          </SideStrip>
        </Workspace>
        <BottomTabs>
          <button>Message List</button>
          <button>Console</button>
        </BottomTabs>
        <StatusBar>
          <svg width="11" height="11" viewBox="0 0 11 11" aria-hidden="true">
            {[[8, 0], [4, 4], [8, 4], [0, 8], [4, 8], [8, 8]].map(([x, y]) => (
              <rect key={`${x}-${y}`} x={x} y={y} width="2" height="2" fill="#8aa0c8" />
            ))}
          </svg>
        </StatusBar>
      </Window>
    </>
  );
}
